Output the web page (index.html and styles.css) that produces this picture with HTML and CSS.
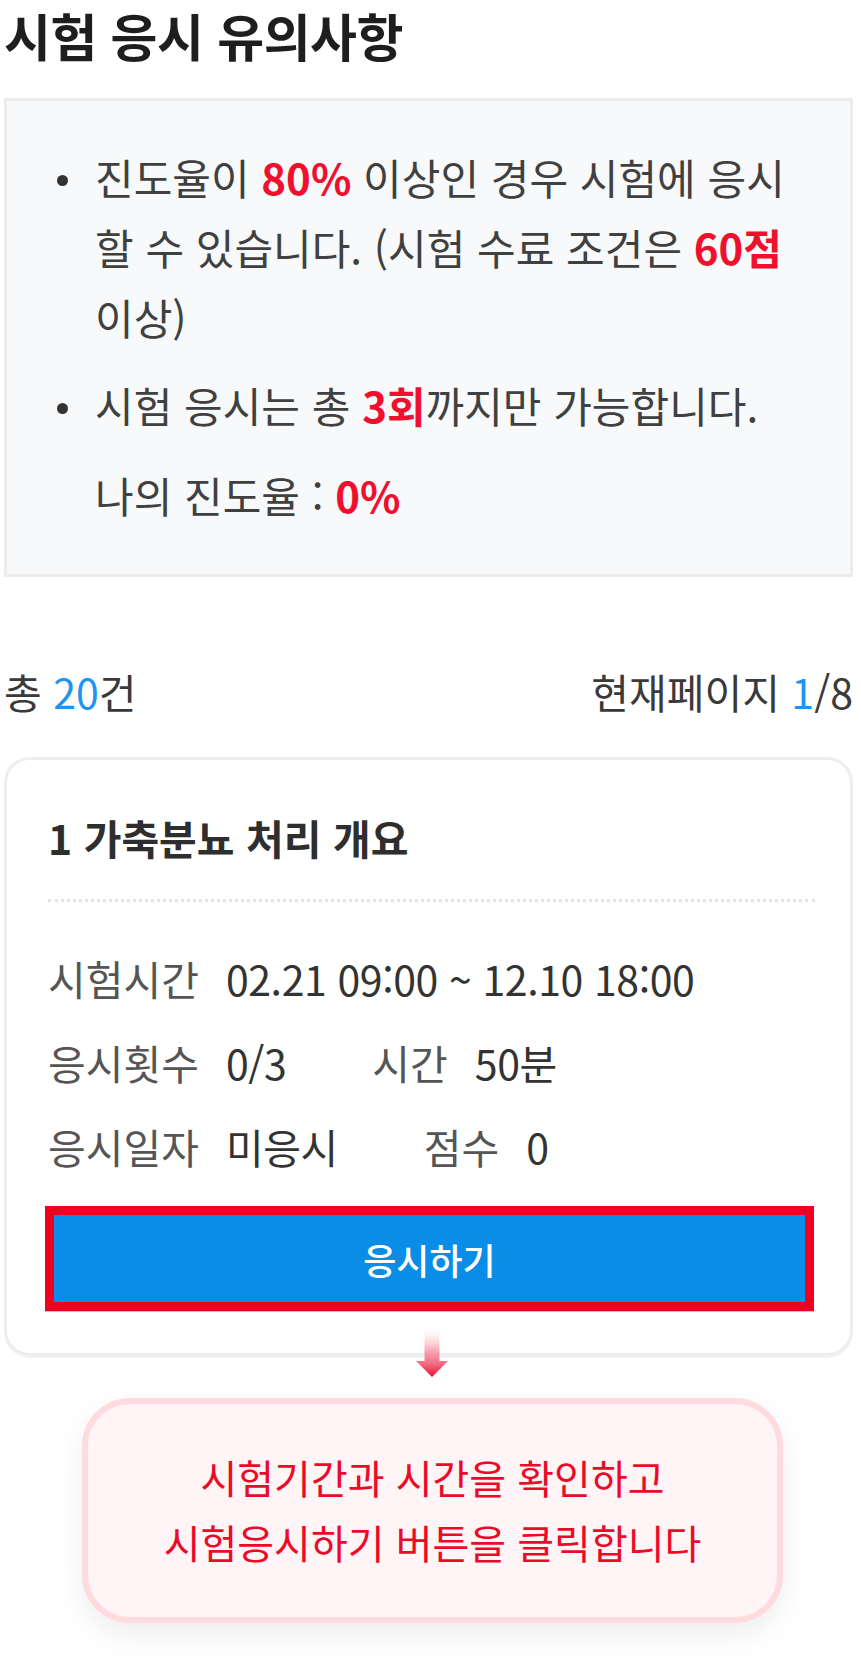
FILE: index.html
```html
<!DOCTYPE html>
<html lang="ko">
<head>
<meta charset="utf-8">
<title>시험 응시 유의사항</title>
<link rel="stylesheet" href="styles.css">
</head>
<body>
<div class="page">
  <h1 class="title">시험 응시 유의사항</h1>

  <div class="notice">
    <ul class="notice-list">
      <li>진도율이 <em class="hl">80%</em> 이상인 경우 시험에 응시 할 수 있습니다. (시험 수료 조건은 <em class="hl">60점</em> 이상)</li>
      <li>시험 응시는 총 <em class="hl">3회</em>까지만 가능합니다.</li>
    </ul>
    <p class="progress">나의 진도율 : <em class="hl">0%</em></p>
  </div>

  <div class="count-row">
    <span>총 <em class="num">20</em>건</span>
    <span>현재페이지 <em class="num">1</em>/8</span>
  </div>

  <div class="card">
    <h2 class="card-title">1 가축분뇨 처리 개요</h2>
    <div class="info">
      <div class="info-row">
        <span class="item"><span class="label">시험시간</span><span class="value">02.21 09:00 ~ 12.10 18:00</span></span>
      </div>
      <div class="info-row">
        <span class="item"><span class="label">응시횟수</span><span class="value">0/3</span></span>
        <span class="item"><span class="label">시간</span><span class="value">50분</span></span>
      </div>
      <div class="info-row">
        <span class="item"><span class="label">응시일자</span><span class="value">미응시</span></span>
        <span class="item"><span class="label">점수</span><span class="value">0</span></span>
      </div>
    </div>
    <div class="btn-mark">
      <button class="btn" type="button">응시하기</button>
    </div>
  </div>

  <div class="arrow">
    <svg width="32" height="52" viewBox="0 0 32 52" aria-hidden="true">
      <defs>
        <linearGradient id="ag" x1="0" y1="0" x2="0" y2="1">
          <stop offset="0" stop-color="#ffffff" stop-opacity="0"/>
          <stop offset="0.45" stop-color="#f9b3bf"/>
          <stop offset="0.75" stop-color="#f36b82"/>
          <stop offset="1" stop-color="#e5102c"/>
        </linearGradient>
      </defs>
      <path d="M8.5 0 H23.5 V36 H32 L16 52 L0 36 H8.5 Z" fill="url(#ag)"/>
    </svg>
  </div>

  <div class="callout">
    <p>시험기간과 시간을 확인하고<br>시험응시하기 버튼을 클릭합니다</p>
  </div>
</div>
</body>
</html>
```

FILE: styles.css
```css
* { box-sizing: border-box; }

html, body {
  margin: 0;
  padding: 0;
  background: #ffffff;
}

body {
  font-family: "Noto Sans CJK KR", "Noto Sans", sans-serif;
  color: #3d3d3d;
}

em { font-style: normal; }

.page {
  width: 861px;
  padding: 0 8px 40px 4px;
}

.title {
  margin: 0 0 28px;
  font-size: 51px;
  line-height: 70px;
  font-weight: 700;
  color: #1e1e1e;
  letter-spacing: -0.5px;
}

.notice {
  background: #f7f9fb;
  border: 3px solid #ececec;
  padding: 41px 50px 44px 88px;
  font-size: 42px;
  line-height: 70px;
  color: #404040;
}

.notice-list {
  list-style: none;
  margin: 0;
  padding: 0;
}

.notice-list li {
  position: relative;
}

.notice-list li + li {
  margin-top: 18px;
}

.notice-list li::before {
  content: "";
  position: absolute;
  left: -38px;
  top: 33px;
  width: 11px;
  height: 11px;
  border-radius: 50%;
  background: #333333;
}

.progress {
  margin: 20px 0 0;
}

.hl {
  color: #f0102d;
  font-weight: 700;
}

.count-row {
  margin-top: 89px;
  display: flex;
  justify-content: space-between;
  font-size: 41px;
  line-height: 50px;
  color: #3a3a3a;
}

.num {
  color: #1e94f0;
}

.card {
  margin-top: 41px;
  border: 3px solid #eeeeee;
  border-radius: 26px;
  box-shadow: 0 2px 0 #f3f3f3;
  padding: 52px 35px 42px 41px;
  background: #ffffff;
}

.card-title {
  margin: 0;
  font-size: 41px;
  line-height: 50px;
  font-weight: 700;
  color: #2e2e2e;
  padding-bottom: 37px;
  border-bottom: 3px dotted #e4e4e4;
}

.info {
  margin-top: 34px;
  font-size: 41px;
  line-height: 84px;
}

.info-row {
  display: flex;
  gap: 86px;
}

.item {
  display: flex;
  gap: 27px;
}

.label {
  color: #555555;
}

.value {
  color: #333333;
  letter-spacing: -0.4px;
}

.btn-mark {
  margin: 18px 1px 0 -3px;
  border: 9px solid #ef001f;
  box-shadow: 0 1px 0 #9fd2f7;
}

.btn {
  display: flex;
  align-items: center;
  justify-content: center;
  width: 100%;
  height: 87px;
  border: 0;
  margin: 0;
  padding: 0;
  background: #0a8de6;
  color: #ffffff;
  font-family: "Noto Sans CJK KR", "Noto Sans", sans-serif;
  font-size: 36px;
  font-weight: 500;
}

.arrow {
  position: relative;
  z-index: 1;
  margin-top: -31px;
  height: 52px;
  display: flex;
  justify-content: center;
}

.arrow svg {
  display: block;
  margin-left: 6px;
}

.callout {
  margin: 21px 0 0 78px;
  width: 701px;
  border: 6px solid #ffdbe0;
  border-radius: 48px;
  background: #fff4f6;
  box-shadow: 0 12px 30px rgba(0, 0, 0, 0.07);
  padding: 41px 0 42px;
  text-align: center;
}

.callout p {
  margin: 0;
  font-size: 40px;
  line-height: 65px;
  color: #ec0a28;
}
```
